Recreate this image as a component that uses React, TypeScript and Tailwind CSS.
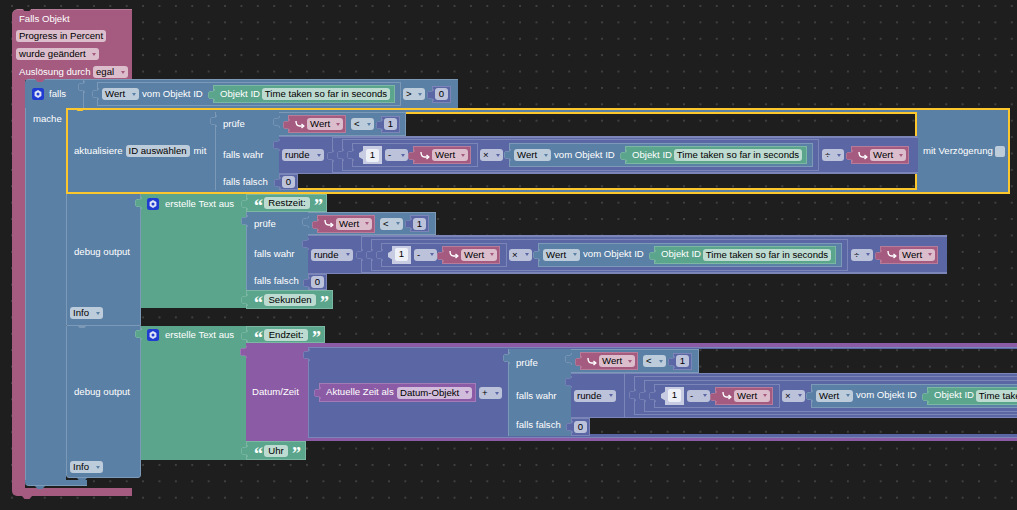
import React from "react";

type Tone = "pink" | "blue" | "green" | "indigo" | "purple";

const FILL: Record<Tone, string> = {
  pink: "bg-[#a55b80] border-[#b77c99]",
  blue: "bg-[#5b80a5] border-[#7c99b7]",
  green: "bg-[#5ba58c] border-[#7cb7a3]",
  indigo: "bg-[#5b67a5] border-[#7c85b7]",
  purple: "bg-[#8c5ba5] border-[#a37cb7]",
};

const FIELD: Record<Tone, string> = {
  pink: "bg-[#dbbdcc]",
  blue: "bg-[#bdccdb]",
  green: "bg-[#bddbd1]",
  indigo: "bg-[#bdc2db]",
  purple: "bg-[#d1bddb]",
};

const ARROW: Record<Tone, string> = {
  pink: "border-t-[#a55b80]",
  blue: "border-t-[#5b80a5]",
  green: "border-t-[#5ba58c]",
  indigo: "border-t-[#5b67a5]",
  purple: "border-t-[#8c5ba5]",
};

const HEX: Record<Tone, [string, string]> = {
  pink: ["#a55b80", "#b77c99"],
  blue: ["#5b80a5", "#7c99b7"],
  green: ["#5ba58c", "#7cb7a3"],
  indigo: ["#5b67a5", "#7c85b7"],
  purple: ["#8c5ba5", "#a37cb7"],
};

const DOTS =
  "bg-[#1e1e1e] bg-[radial-gradient(circle_at_1px_1px,#404040_0.8px,transparent_1px)] bg-[size:16.4px_16.4px] bg-[position:11px_5px]";

// puzzle tab on the left edge of a value block
function Tab({ tone, className = "top-[3px]" }: { tone: Tone; className?: string }) {
  const [fill, line] = HEX[tone];
  return (
    <svg width="7" height="12" viewBox="0 0 7 12" className={`absolute left-[-6px] z-10 ${className}`}>
      <path d="M6.5 0V1.5L4.5 2.5H1.5L.5 3.5V8.5L1.5 9.5H4.5L6.5 10.5V12" fill={fill} stroke={line} strokeWidth="0.8" />
    </svg>
  );
}

// small notch where a statement block connects
function Notch({ className, fill }: { className: string; fill: string }) {
  return (
    <svg width="10" height="3" viewBox="0 0 10 3" className={`absolute ${className}`}>
      <path d="M0 0H10L7.5 3H2.5Z" fill={fill} />
    </svg>
  );
}

function Field({
  tone,
  children,
  className = "",
  arrow = true,
}: {
  tone: Tone;
  children: React.ReactNode;
  className?: string;
  arrow?: boolean;
}) {
  return (
    <span
      className={`flex h-[12px] shrink-0 items-center justify-between whitespace-nowrap rounded-[3px] px-[3px] text-[9.6px] leading-none text-black ${FIELD[tone]} ${className}`}
    >
      {children}
      {arrow && (
        <span
          className={`ml-[3px] h-0 w-0 border-x-[2.5px] border-t-[3px] border-x-transparent ${ARROW[tone]}`}
        />
      )}
    </span>
  );
}

function Gear({ className = "" }: { className?: string }) {
  return (
    <svg width="12" height="12" viewBox="0 0 12 12" className={className}>
      <rect width="12" height="12" rx="2.5" fill="#1f3bd1" />
      <path d="M6 2 9.4 4V8L6 10 2.6 8V4Z" fill="#dfe4f7" />
      <circle cx="6" cy="6" r="1.5" fill="#1f3bd1" />
    </svg>
  );
}

function Wert({ className = "" }: { className?: string }) {
  return (
    <div className={`relative flex h-[18px] w-[58px] shrink-0 items-center border pl-[6px] ${FILL.pink} ${className}`}>
      <Tab tone="pink" />
      <svg width="11" height="9" viewBox="0 0 11 9" fill="none" stroke="#fff" strokeWidth="1.4">
        <path d="M1 1C1 4 2 6 4.5 6H8.5" />
        <path d="M6.5 4 8.8 6 6.5 8" />
      </svg>
      <Field tone="pink" className="ml-[1px] w-[36px]">
        Wert
      </Field>
    </div>
  );
}

function NumberBlock({ value, className = "" }: { value: string; className?: string }) {
  return (
    <div className={`relative flex h-[17px] w-[19px] shrink-0 items-center justify-center border ${FILL.indigo} ${className}`}>
      <Tab tone="indigo" className="top-[2px]" />
      <Field tone="indigo" arrow={false} className="w-[13px] justify-center">
        {value}
      </Field>
    </div>
  );
}

// "Wert vom Objekt ID [Objekt ID Time taken...]" value
function ObjectValue({ className = "" }: { className?: string }) {
  return (
    <div className={`relative flex h-[24px] w-[304px] shrink-0 items-center border pl-[4px] text-white ${FILL.blue} ${className}`}>
      <Tab tone="blue" className="top-[5px]" />
      <Field tone="blue" className="w-[37px]">
        Wert
      </Field>
      <span className="ml-[3px] w-[64px] whitespace-nowrap text-[9.6px]">vom Objekt ID</span>
      <div className={`relative ml-[7px] flex h-[18px] w-[182px] shrink-0 items-center border pl-[6px] ${FILL.green}`}>
        <Tab tone="green" />
        <span className="w-[42px] whitespace-nowrap text-[9.6px]">Objekt ID</span>
        <Field tone="green" arrow={false} className="w-[128px] justify-center">
          Time taken so far in seconds
        </Field>
      </div>
    </div>
  );
}

// runde ( (1 - Wert) x objectValue / Wert ), `deep` adds the extra wrapper of the last one
function RoundExpr({ deep = false, className = "" }: { deep?: boolean; className?: string }) {
  const minus = (
    <div className={`relative flex h-[24px] w-[126px] shrink-0 items-center border pl-[10px] ${FILL.indigo}`}>
      <Tab tone="indigo" className="top-[5px]" />
      <div className="relative flex h-[18px] w-[19px] shrink-0 items-center justify-center bg-[#c8cce2]">
        <svg width="5" height="10" viewBox="0 0 5 10" className="absolute left-[-4px] top-[4px]">
          <path d="M5 0 0 3V7L5 10Z" fill="#c8cce2" />
        </svg>
        <span className="flex h-[13px] w-[13px] items-center justify-center rounded-[2px] bg-[#eef0f8] text-[9.6px] text-black">1</span>
      </div>
      <Field tone="indigo" className="ml-[3px] w-[23px]">
        -
      </Field>
      <Wert className="ml-[5px]" />
    </div>
  );
  const times = (
    <div className={`relative flex h-[32px] w-[477px] shrink-0 items-center border pl-[9px] ${FILL.indigo}`}>
      <Tab tone="indigo" className="top-[9px]" />
      {minus}
      <Field tone="indigo" className="ml-[2px] w-[23px]">
        ×
      </Field>
      <ObjectValue className="ml-[6px]" />
    </div>
  );
  const divide = (
    <div className={`relative flex h-full w-[586px] shrink-0 items-center border-y border-l pl-[9px] ${FILL.indigo}`}>
      <Tab tone="indigo" className="top-[12px]" />
      {times}
      <Field tone="indigo" className="ml-[3px] w-[22px]">
        ÷
      </Field>
      <Wert className="ml-[7px]" />
    </div>
  );
  return (
    <div className={`relative flex shrink-0 items-center border-y pl-[3px] ${FILL.indigo} ${className}`}>
      <Tab tone="indigo" className="top-[2px]" />
      <Field tone="indigo" className="w-[42px]">
        runde
      </Field>
      <div className="ml-[8px] flex h-full shrink-0 items-center">
        {deep ? (
          <div className={`flex h-full shrink-0 items-center border-l py-[2px] pl-[9px] ${FILL.indigo}`}>{divide}</div>
        ) : (
          divide
        )}
      </div>
    </div>
  );
}

function Ternary({
  className,
  labelWidth,
  rows,
  labelRows,
  expr,
  compareWidth,
}: {
  className: string;
  labelWidth: string;
  rows: [string, string, string];
  labelRows: [string, string, string];
  expr: React.ReactNode;
  compareWidth: string;
}) {
  return (
    <div className={`absolute flex items-start ${className}`}>
      <div className={`relative flex shrink-0 flex-col border-l pl-[7px] text-[9.6px] text-white ${labelWidth} ${FILL.blue}`}>
        <Tab tone="blue" />
        <span className={`flex items-center ${labelRows[0]}`}>prüfe</span>
        <span className={`flex items-center ${labelRows[1]}`}>falls wahr</span>
        <span className={`flex items-center ${labelRows[2]}`}>falls falsch</span>
      </div>
      <div className="flex min-w-0 flex-col items-start">
        <div className={`relative flex items-center border-y border-r pl-[9px] ${rows[0]} ${compareWidth} ${FILL.blue}`}>
          <Tab tone="blue" />
          <Wert />
          <Field tone="blue" className="ml-[5px] w-[23px]">
            &lt;
          </Field>
          <NumberBlock value="1" className="ml-[7px]" />
        </div>
        {expr}
        <div className={`relative flex w-[19px] items-center justify-center border ${rows[2]} ${FILL.indigo}`}>
          <Tab tone="indigo" className="top-[2px]" />
          <Field tone="indigo" arrow={false} className="w-[13px] justify-center">
            0
          </Field>
        </div>
      </div>
    </div>
  );
}

function TextValue({ children, className, fieldWidth }: { children: string; className: string; fieldWidth: string }) {
  return (
    <div className={`absolute flex items-center border pl-[7px] text-white ${FILL.green} ${className}`}>
      <Tab tone="green" />
      <span className="mt-[6px] w-[10px] font-['Liberation_Serif',serif] text-[18px] font-bold leading-none">“</span>
      <Field tone="green" arrow={false} className={`justify-center ${fieldWidth}`}>
        {children}
      </Field>
      <span className="ml-[4px] mt-[6px] w-[10px] font-['Liberation_Serif',serif] text-[18px] font-bold leading-none">”</span>
    </div>
  );
}

export default function App() {
  return (
    <div className={`relative h-[510px] w-[1017px] overflow-hidden font-['Liberation_Sans',Arial,sans-serif] text-[9.6px] ${DOTS}`}>
      {/* Falls Objekt */}
      <div className={`absolute left-[12px] top-[9px] flex h-[71px] w-[120px] flex-col items-start rounded-tl-[6px] border-t pl-[4px] text-white ${FILL.pink}`}>
        <span className="ml-[3px] mt-[3px] h-[12px] leading-[12px]">Falls Objekt</span>
        <Field tone="pink" arrow={false} className="mt-[5px] w-[90px] justify-center">
          Progress in Percent
        </Field>
        <Field tone="pink" className="mt-[6px] w-[83px]">
          wurde geändert
        </Field>
        <div className="mt-[5px] flex items-center">
          <span className="ml-[3px] w-[74px] whitespace-nowrap">Auslösung durch</span>
          <Field tone="pink" className="w-[35px]">
            egal
          </Field>
        </div>
      </div>
      <Notch className="left-[22px] top-[8px]" fill="#1e1e1e" />
      <div className={`absolute left-[12px] top-[80px] h-[408px] w-[13px] ${FILL.pink}`} />
      <div className={`absolute left-[12px] top-[488px] h-[8px] w-[120px] rounded-bl-[5px] ${FILL.pink}`} />
      <Notch className="left-[22px] top-[496px]" fill="#a55b80" />

      {/* falls */}
      <div className={`absolute left-[25px] top-[79px] flex h-[29px] w-[433px] items-center rounded-tl-[4px] border-t border-r text-white ${FILL.blue}`}>
        <Gear className="ml-[7px]" />
        <span className="ml-[5px]">falls</span>
        <div className={`absolute left-[58px] top-0 flex h-full w-[375px] items-center border-l pl-[13px] ${FILL.blue}`}>
          <Tab tone="blue" className="top-[1px]" />
          <ObjectValue />
          <Field tone="blue" className="ml-[2px] w-[22px]">
            &gt;
          </Field>
          <NumberBlock value="0" className="ml-[7px]" />
        </div>
      </div>
      <Notch className="left-[35px] top-[79px]" fill="#a55b80" />
      <div className={`absolute left-[25px] top-[108px] h-[372px] w-[41px] border-l pl-[7px] pt-[4px] text-white ${FILL.blue}`}>
        mache
      </div>
      <div className={`absolute left-[25px] top-[480px] h-[6px] w-[62px] rounded-bl-[4px] border-b ${FILL.blue}`} />
      <Notch className="left-[35px] top-[486px]" fill="#5b80a5" />

      {/* aktualisiere, selected */}
      <div className="absolute left-[66px] top-[108px] flex h-[86px] w-[944px] items-center border-2 border-[#fcc62d] bg-[#5b80a5] pl-[6px] text-white">
        aktualisiere
        <Field tone="blue" arrow={false} className="ml-[3px] w-[64px] justify-center">
          ID auswählen
        </Field>
        <span className="ml-[4px]">mit</span>
        <span className="absolute left-[855px]">mit Verzögerung</span>
        <span className="absolute left-[927px] h-[11px] w-[10px] rounded-[2px] bg-[#bdccdb]" />
      </div>
      <Notch className="left-[75px] top-[108px]" fill="#fcc62d" />
      <div className={`absolute left-[216px] top-[112px] h-[78px] w-[701px] border-y-2 border-r-2 border-[#fcc62d] bg-fixed ${DOTS}`} />
      <Ternary
        className="left-[215px] top-[112px]"
        labelWidth="w-[64px]"
        compareWidth="w-[127px]"
        rows={["h-[24px]", "h-[38px]", "h-[16px]"]}
        labelRows={["h-[25px]", "h-[37px]", "h-[16px]"]}
        expr={<RoundExpr className="h-[38px] w-[638px]" />}
      />

      {/* debug output 1 */}
      <div className={`absolute left-[66px] top-[194px] flex h-[131px] w-[75px] flex-col items-start border-x pl-[3px] text-white ${FILL.blue}`}>
        <span className="ml-[4px] mt-[52px] h-[12px] whitespace-nowrap leading-[12px]">debug output</span>
        <Field tone="blue" className="mt-[49px] w-[33px]">
          Info
        </Field>
      </div>
      <div className={`absolute left-[141px] top-[194px] flex h-[114px] w-[105px] items-start pl-[6px] pt-[4px] text-white ${FILL.green}`}>
        <Tab tone="green" className="top-[3px]" />
        <Gear />
        <span className="ml-[6px] whitespace-nowrap leading-[12px]">erstelle Text aus</span>
      </div>
      <TextValue className="left-[246px] top-[194px] h-[18px] w-[81px]" fieldWidth="w-[46px]">
        Restzeit:
      </TextValue>
      <Ternary
        className="left-[246px] top-[212px] w-[771px]"
        labelWidth="w-[62px]"
        compareWidth="w-[128px]"
        rows={["h-[23px]", "h-[39px]", "h-[16px]"]}
        labelRows={["h-[25px]", "h-[35px]", "h-[18px]"]}
        expr={<RoundExpr className="h-[39px] w-[639px]" />}
      />
      <TextValue className="left-[246px] top-[290px] h-[19px] w-[87px]" fieldWidth="w-[52px]">
        Sekunden
      </TextValue>

      {/* debug output 2 */}
      <div className={`absolute left-[66px] top-[325px] flex h-[153px] w-[75px] flex-col items-start rounded-b-[3px] border pl-[3px] text-white ${FILL.blue}`}>
        <span className="ml-[4px] mt-[60px] h-[12px] whitespace-nowrap leading-[12px]">debug output</span>
        <Field tone="blue" className="mt-[63px] w-[33px]">
          Info
        </Field>
      </div>
      <Notch className="left-[77px] top-[325px]" fill="#7c99b7" />
      <Notch className="left-[77px] top-[478px]" fill="#5b80a5" />
      <div className={`absolute left-[141px] top-[326px] flex h-[134px] w-[105px] items-start pl-[6px] pt-[3px] text-white ${FILL.green}`}>
        <Tab tone="green" className="top-[2px]" />
        <Gear />
        <span className="ml-[6px] whitespace-nowrap leading-[12px]">erstelle Text aus</span>
      </div>
      <TextValue className="left-[246px] top-[326px] h-[17px] w-[79px]" fieldWidth="w-[44px]">
        Endzeit:
      </TextValue>
      <div className={`absolute left-[246px] top-[343px] flex h-[98px] w-[771px] items-center pl-[6px] text-white ${FILL.purple}`}>
        <Tab tone="purple" className="top-[3px]" />
        Datum/Zeit
      </div>
      <div className={`absolute left-[308px] top-[347px] h-[91px] w-[709px] border-y border-l ${FILL.indigo}`}>
        <Tab tone="indigo" className="top-[1px]" />
      </div>
      <div className={`absolute left-[699px] top-[349px] h-[24px] w-[318px] bg-fixed ${DOTS}`} />
      <div className={`absolute left-[590px] top-[418px] h-[16px] w-[427px] bg-fixed ${DOTS}`} />
      <div className={`absolute left-[319px] top-[383px] flex h-[19px] w-[157px] items-center border pl-[6px] text-white ${FILL.purple}`}>
        <Tab tone="purple" />
        <span className="w-[71px] whitespace-nowrap">Aktuelle Zeit als</span>
        <Field tone="purple" className="w-[75px]">
          Datum-Objekt
        </Field>
      </div>
      <Field tone="indigo" className="absolute left-[479px] top-[387px] w-[23px]">
        +
      </Field>
      <Ternary
        className="left-[508px] top-[349px]"
        labelWidth="w-[63px]"
        compareWidth="w-[128px]"
        rows={["h-[24px]", "h-[45px]", "h-[18px]"]}
        labelRows={["h-[28px]", "h-[38px]", "h-[21px]"]}
        expr={<RoundExpr deep className="h-[45px] w-[648px]" />}
      />
      <TextValue className="left-[246px] top-[441px] h-[19px] w-[60px]" fieldWidth="w-[24px]">
        Uhr
      </TextValue>
    </div>
  );
}
